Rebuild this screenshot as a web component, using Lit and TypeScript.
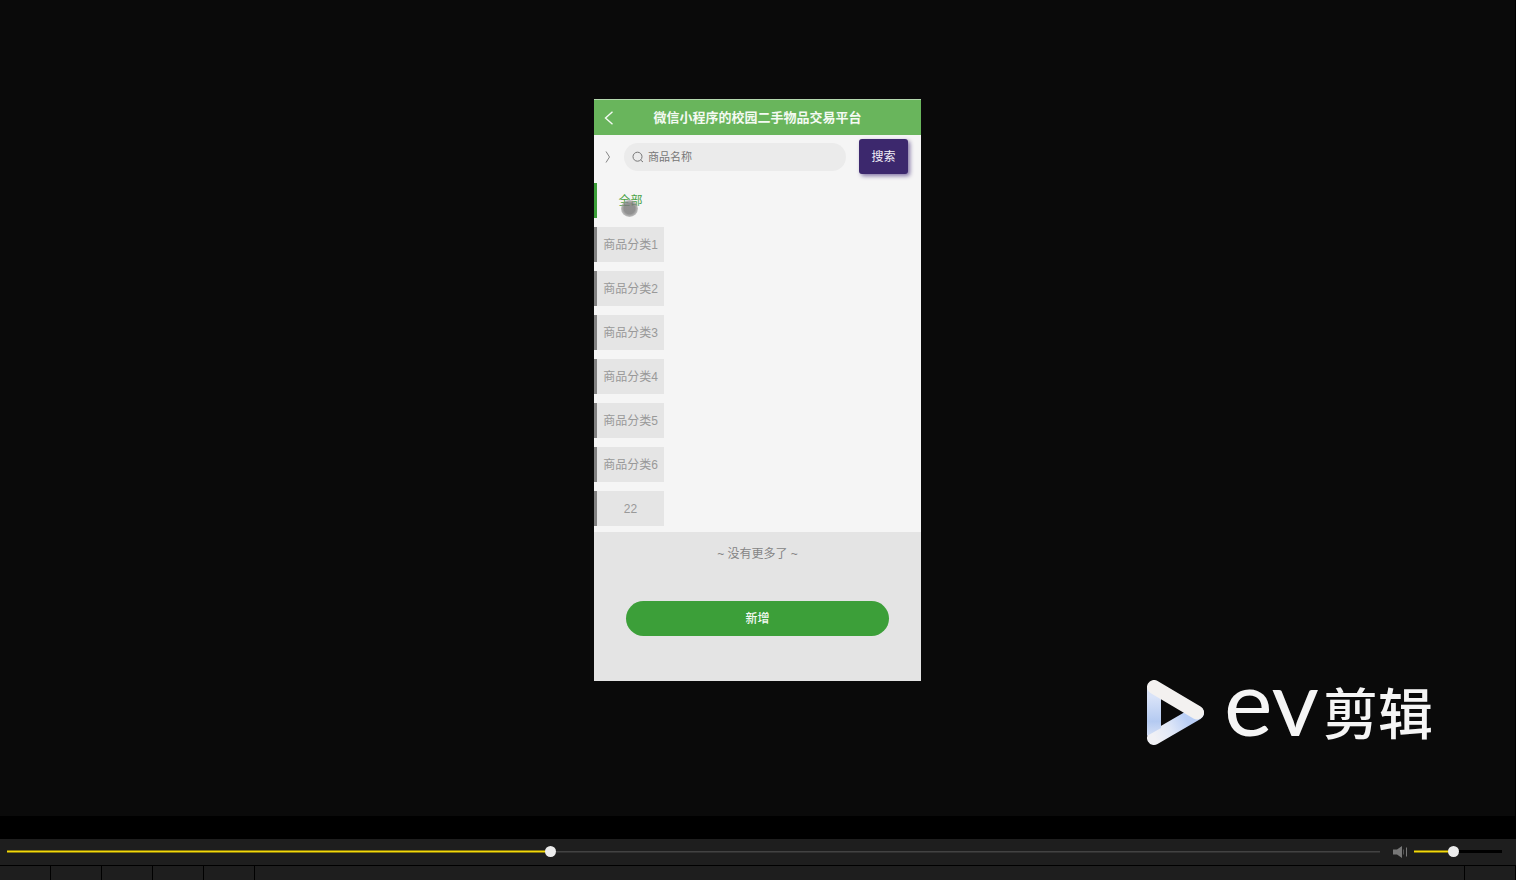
import { LitElement, html, css, svg } from "lit";
import { customElement, property, state } from "lit/decorators.js";
import { classMap } from "lit/directives/class-map.js";

const CATEGORIES = ["全部", "商品分类1", "商品分类2", "商品分类3", "商品分类4", "商品分类5", "商品分类6", "22"];

@customElement("shop-screen")
export class ShopScreen extends LitElement {
  @state() private active = 0;

  static styles = css`
    :host {
      display: flex;
      flex-direction: column;
      width: 327px;
      background: #f5f5f5;
      font-family: "Liberation Sans", "Noto Sans CJK SC", sans-serif;
      font-size: 12px;
      line-height: 18px;
      color: #858585;
    }
    button,
    input {
      font: inherit;
      border: 0;
      margin: 0;
      padding: 0;
      background: none;
    }
    svg {
      display: block;
      fill: none;
    }
    .bar {
      display: grid;
      grid-template-columns: 30px 1fr 30px;
      align-items: center;
      height: 35px;
      border-top: 1px solid #b4d8ae;
      background: #69b55c;
      color: #f4faf3;
    }
    .back {
      display: flex;
      justify-content: center;
      color: inherit;
    }
    .title {
      margin: 0;
      text-align: center;
      font-size: 13px;
      line-height: 18px;
      font-weight: 700;
      white-space: nowrap;
    }
    .search {
      display: flex;
      align-items: center;
      padding: 4px 13px 9px 10px;
    }
    .box {
      flex: 1;
      min-width: 0;
      display: flex;
      align-items: center;
      gap: 4px;
      height: 28px;
      margin: 0 13px 0 12px;
      padding: 0 8px;
      border-radius: 14px;
      background: #ebebeb;
    }
    .box input {
      flex: 1;
      min-width: 0;
      font-size: 11px;
      color: #666;
      outline: none;
    }
    .box input::placeholder {
      color: #777;
      opacity: 1;
    }
    .go {
      width: 49px;
      height: 35px;
      border-radius: 3px;
      background: #3c286d;
      color: #f3f0f8;
      box-shadow: 2px 2px 4px #8375a5;
    }
    .list {
      list-style: none;
      display: flex;
      flex-direction: column;
      align-items: flex-start;
      gap: 9px;
      margin: 0;
      padding: 0 0 6px;
    }
    .cat {
      position: relative;
      display: block;
      width: 70px;
      height: 35px;
      border-left: 3px solid #828282;
      background: #e5e5e5;
      color: #999;
      white-space: nowrap;
    }
    .cat.on {
      border-color: #3c9f39;
      background: none;
      color: #4ba246;
    }
    .touch {
      position: absolute;
      left: 24px;
      top: 17px;
      width: 17px;
      height: 17px;
      border-radius: 50%;
      background: radial-gradient(#777c 45%, #aaa9 75%);
    }
    .foot {
      display: flex;
      flex-direction: column;
      align-items: center;
      gap: 38px;
      padding: 13px 32px 45px;
      background: #e4e4e4;
    }
    .more {
      margin: 0;
    }
    .add {
      width: 100%;
      height: 35px;
      border-radius: 18px;
      background: #3c9f39;
      color: #f3faf3;
      font-weight: 500;
    }
  `;

  render() {
    return html`
      <header class="bar">
        <button class="back" aria-label="返回">
          <svg width="10" height="14" viewBox="0 0 10 14" stroke="currentColor" stroke-width="1.4"><path d="M8.5 .7 1.5 7l7 6.3" /></svg>
        </button>
        <h1 class="title">微信小程序的校园二手物品交易平台</h1>
      </header>
      <form class="search" @submit=${(e: Event) => e.preventDefault()}>
        <svg width="8" height="12" viewBox="0 0 8 12" stroke="#858585"><path d="m2 .5 3.5 5.5L2 11.5" /></svg>
        <label class="box">
          <svg width="12" height="12" viewBox="0 0 12 12" stroke="#777"><circle cx="5.5" cy="5.7" r="4.5" /><path d="m8.6 9 2.4 2" /></svg>
          <input type="text" placeholder="商品名称" aria-label="商品名称" />
        </label>
        <button class="go" type="submit">搜索</button>
      </form>
      <ul class="list">
        ${CATEGORIES.map(
          (name, i) => html`<li>
            <button class=${classMap({ cat: true, on: i === this.active })} @click=${() => (this.active = i)}>
              ${name}${i === 0 ? html`<span class="touch"></span>` : null}
            </button>
          </li>`
        )}
      </ul>
      <footer class="foot">
        <p class="more">~ 没有更多了 ~</p>
        <button class="add">新增</button>
      </footer>
    `;
  }
}

@customElement("track-slider")
export class TrackSlider extends LitElement {
  @property() label = "";
  @property({ type: Number }) value = 0;

  static styles = css`
    :host {
      display: block;
      --rest: linear-gradient(#1e1e1e 1px, #424242 1px 2px, #303030 2px);
    }
    :host([solid]) {
      --rest: linear-gradient(#000, #000);
    }
    input {
      appearance: none;
      display: block;
      width: 100%;
      height: 11px;
      margin: 0;
      background: none;
    }
    input::-webkit-slider-runnable-track {
      height: 3px;
      background:
        linear-gradient(#87790c 1px, #f4d90a 1px 2px, #87790c 2px) 0 0 / var(--fill) 100% no-repeat,
        var(--rest);
    }
    input::-webkit-slider-thumb {
      appearance: none;
      width: 11px;
      height: 11px;
      margin-top: -4px;
      border-radius: 50%;
      background: #ececec;
    }
  `;

  render() {
    return html`<input
      type="range"
      min="0"
      max="1000"
      aria-label=${this.label}
      .value=${String(this.value)}
      style="--fill: ${this.value / 10}%"
      @input=${(e: Event) => (this.value = Number((e.target as HTMLInputElement).value))}
    />`;
  }
}

@customElement("app-root")
export class AppRoot extends LitElement {
  static styles = css`
    :host {
      display: flex;
      flex-direction: column;
      min-height: 100vh;
      background: #000;
    }
    .stage {
      position: relative;
      flex: 1;
      display: flex;
      justify-content: center;
      align-items: flex-start;
      padding: 99px 0 40px;
      border-right: 1px solid #000;
      background: #0a0a0a;
    }
    .mark {
      position: absolute;
      right: 82px;
      bottom: 70px;
      display: flex;
      align-items: center;
      gap: 19px;
      height: 66px;
      color: #f5f5f5;
    }
    .mark svg {
      display: block;
    }
    .brand {
      display: flex;
      align-items: center;
      gap: 4px;
      white-space: nowrap;
      line-height: 66px;
    }
    .latin {
      padding-bottom: 24px;
      font-family: Lato, sans-serif;
      font-size: 92px;
    }
    .han {
      padding-bottom: 6px;
      font-family: "Noto Sans CJK SC", sans-serif;
      font-size: 55px;
      font-weight: 500;
    }
    .controls {
      display: flex;
      align-items: center;
      height: 25px;
      margin-top: 23px;
      padding: 0 14px 1px 7px;
      background: #1e1e1e;
    }
    .seek {
      flex: 1;
    }
    .mute {
      display: flex;
      margin: 0 6px 0 12px;
      padding: 0;
      border: 0;
      background: none;
    }
    .volume {
      width: 88px;
    }
    .tabs {
      display: flex;
      gap: 1px;
      height: 14px;
      margin-top: 1px;
      padding-right: 1px;
    }
    .tab {
      width: 50px;
      background: #1e1e1e;
    }
    .tab.wide {
      flex: 1;
    }
  `;

  private logo = svg`
    <defs>
      <linearGradient id="side" x1="0" y1="0" x2="0" y2="1">
        <stop offset="0.2" stop-color="#d9e3f8" />
        <stop offset="0.7" stop-color="#b4caf1" />
        <stop offset="1" stop-color="#d5e0f6" />
      </linearGradient>
      <linearGradient id="base" gradientUnits="userSpaceOnUse" x1="8" y1="58" x2="48" y2="36">
        <stop offset="0" stop-color="#f1f1f5" />
        <stop offset="0.4" stop-color="#dfe7f7" />
        <stop offset="0.8" stop-color="#b9cef5" />
      </linearGradient>
    </defs>
    <path d="M7 58 50 33" stroke="url(#base)" stroke-width="14" stroke-linecap="round" />
    <path d="M0 7h14v41L0 56Z" fill="url(#side)" />
    <path d="M7 7 50 32.5" stroke="#f3f1f0" stroke-width="14" stroke-linecap="round" />
  `;

  render() {
    return html`
      <main class="stage">
        <shop-screen></shop-screen>
        <div class="mark">
          <svg width="58" height="66" viewBox="0 0 58 66" fill="none">${this.logo}</svg>
          <div class="brand"><span class="latin">ev</span><span class="han">剪辑</span></div>
        </div>
      </main>
      <div class="controls">
        <track-slider class="seek" label="播放进度" .value=${395}></track-slider>
        <button class="mute" aria-label="静音">
          <svg width="16" height="14" viewBox="0 0 16 14">
            <path d="M1 4.5h4L10 1v12L5 9.5H1Z" fill="#777" />
            <path d="M11.5 4.5v5" stroke="#555" />
            <path d="M14.5 2.5v9" stroke="#777" />
          </svg>
        </button>
        <track-slider class="volume" label="音量" solid .value=${442}></track-slider>
      </div>
      <div class="tabs">
        ${[0, 1, 2, 3, 4].map(() => html`<div class="tab"></div>`)}
        <div class="tab wide"></div>
        <div class="tab"></div>
      </div>
    `;
  }
}
